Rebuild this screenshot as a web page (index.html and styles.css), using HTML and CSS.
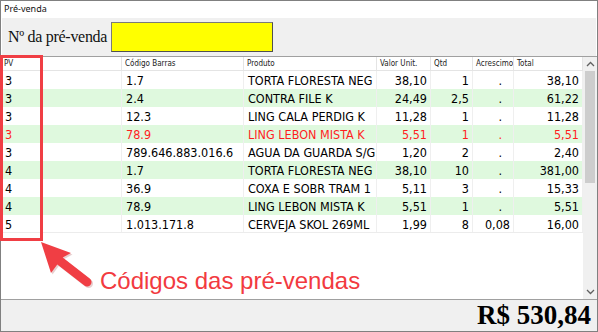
FILE: index.html
```html
<!DOCTYPE html>
<html lang="pt">
<head>
<meta charset="utf-8">
<link rel="stylesheet" href="styles.css">
</head>
<body>
<div class="window">
  <div class="titlebar">Pré-venda</div>
  <div class="toolbar">
    <span class="label">Nº da pré-venda</span>
    <div class="input"></div>
  </div>
  <div class="grid">
    <div class="table">
      <div class="row head">
        <div class="c">PV</div><div class="c">Código Barras</div><div class="c">Produto</div><div class="c">Valor Unit.</div><div class="c">Qtd</div><div class="c">Acrescimo</div><div class="c">Total</div>
      </div>
      <div class="row"><div class="c">3</div><div class="c">1.7</div><div class="c">TORTA FLORESTA NEG</div><div class="c r">38,10</div><div class="c r">1</div><div class="c r dot">.</div><div class="c r">38,10</div></div>
      <div class="row g"><div class="c">3</div><div class="c">2.4</div><div class="c">CONTRA FILE K</div><div class="c r">24,49</div><div class="c r">2,5</div><div class="c r dot">.</div><div class="c r">61,22</div></div>
      <div class="row"><div class="c">3</div><div class="c">12.3</div><div class="c">LING CALA PERDIG K</div><div class="c r">11,28</div><div class="c r">1</div><div class="c r dot">.</div><div class="c r">11,28</div></div>
      <div class="row g red"><div class="c">3</div><div class="c">78.9</div><div class="c">LING LEBON MISTA K</div><div class="c r">5,51</div><div class="c r">1</div><div class="c r dot">.</div><div class="c r">5,51</div></div>
      <div class="row"><div class="c">3</div><div class="c">789.646.883.016.6</div><div class="c">AGUA DA GUARDA S/G</div><div class="c r">1,20</div><div class="c r">2</div><div class="c r dot">.</div><div class="c r">2,40</div></div>
      <div class="row g"><div class="c">4</div><div class="c">1.7</div><div class="c">TORTA FLORESTA NEG</div><div class="c r">38,10</div><div class="c r">10</div><div class="c r dot">.</div><div class="c r">381,00</div></div>
      <div class="row"><div class="c">4</div><div class="c">36.9</div><div class="c">COXA E SOBR TRAM 1</div><div class="c r">5,11</div><div class="c r">3</div><div class="c r dot">.</div><div class="c r">15,33</div></div>
      <div class="row g"><div class="c">4</div><div class="c">78.9</div><div class="c">LING LEBON MISTA K</div><div class="c r">5,51</div><div class="c r">1</div><div class="c r dot">.</div><div class="c r">5,51</div></div>
      <div class="row last"><div class="c">5</div><div class="c">1.013.171.8</div><div class="c">CERVEJA SKOL 269ML</div><div class="c r">1,99</div><div class="c r">8</div><div class="c r">0,08</div><div class="c r">16,00</div></div>
    </div>
    <div class="scrollbar">
      <div class="arrow">
        <svg width="9" height="6" viewBox="0 0 9 6"><path d="M1 5 L4.5 1.5 L8 5" fill="none" stroke="#606060" stroke-width="1.3"/></svg>
      </div>
      <div class="thumb"></div>
      <div class="track"></div>
      <div class="arrow">
        <svg width="9" height="6" viewBox="0 0 9 6"><path d="M1 1 L4.5 4.5 L8 1" fill="none" stroke="#606060" stroke-width="1.3"/></svg>
      </div>
    </div>
  </div>
  <div class="bottom">R$ 530,84</div>

  <div class="hl-box"></div>
  <svg class="hl-arrow" width="70" height="60" viewBox="0 0 70 60">
    <path transform="translate(1.5,1.5)" fill="#a04040" opacity="0.25" d="M10 0 L40 11 L31.7 15.4 L58.7 36.4 A4.5 4.5 0 0 1 53.3 43.6 L26.3 22.6 L20 31 Z"/>
    <path fill="#f03e44" d="M10 0 L40 11 L31.7 15.4 L58.7 36.4 A4.5 4.5 0 0 1 53.3 43.6 L26.3 22.6 L20 31 Z"/>
  </svg>
  <div class="hl-text">Códigos das pré-vendas</div>
</div>
</body>
</html>
```

FILE: styles.css
```css
* { box-sizing: border-box; }
html, body { margin: 0; padding: 0; }
body { width: 598px; height: 332px; overflow: hidden; background: #fff; }

.window {
  position: relative;
  width: 598px;
  height: 332px;
  border: 1px solid #808080;
  display: flex;
  flex-direction: column;
  background: #fff;
}

.titlebar {
  height: 17px;
  line-height: 16px;
  padding-left: 3px;
  font-family: "Noto Sans", sans-serif;
  font-size: 9px;
  color: #111;
  background: #fff;
}

.toolbar {
  height: 38px;
  background: #f0f0f0;
  display: flex;
  align-items: center;
  padding-left: 6px;
  gap: 4px;
  margin: 0 1px;
}

.label {
  font-family: "Liberation Serif", serif;
  font-size: 16px;
  letter-spacing: -0.3px;
  color: #111;
}

.input {
  width: 162px;
  height: 30px;
  background: #ffff00;
  border: 1px solid #7a7a7a;
  border-right-color: #505050;
  border-bottom-color: #505050;
}

.grid {
  flex: 1;
  display: flex;
  border-top: 1px solid #a0a0a0;
  min-height: 0;
}

.table {
  width: 582px;
  display: flex;
  flex-direction: column;
}

.row {
  display: grid;
  grid-template-columns: 121px 122px 133px 54px 42px 41px 69px;
  height: 18px;
  font-family: "DejaVu Sans Condensed", "DejaVu Sans", sans-serif;
  font-stretch: condensed;
  font-size: 12.5px;
  color: #000;
  background: #fff;
}

.row .c {
  padding: 0 3px 0 4px;
  line-height: 19px;
  white-space: nowrap;
  overflow: hidden;
  border-right: 1px solid #efefef;
}

.row .c.r { text-align: right; }
.row .c.dot { padding-right: 11px; }

.row.g { background: #dff9de; }
.row.red { color: #ff1e1e; }
.row.last { border-bottom: 1px solid #ececec; }

.row.head {
  height: 14px;
  font-size: 8px;
  color: #222;
  border-bottom: 1px solid #e4e4e4;
}
.row.head .c {
  line-height: 14px;
  padding-left: 3px;
  border-right: 1px solid #e4e4e4;
}

.scrollbar {
  width: 14px;
  background: #f0f0f0;
  display: flex;
  flex-direction: column;
  align-items: center;
}
.arrow {
  height: 14px;
  display: flex;
  align-items: center;
  justify-content: center;
}
.thumb {
  width: 10px;
  height: 112px;
  background: #cdcdcd;
}
.track { flex: 1; }

.bottom {
  height: 32px;
  border-top: 1px solid #a0a0a0;
  background: #f0f0f0;
  text-align: right;
  padding-right: 6px;
  font-family: "Liberation Serif", serif;
  font-weight: bold;
  font-size: 27px;
  line-height: 31px;
  color: #000;
}

.hl-box {
  position: absolute;
  left: -1px;
  top: 54px;
  width: 43px;
  height: 186px;
  border: 3px solid #f03e44;
}

.hl-arrow {
  position: absolute;
  left: 30px;
  top: 241px;
  overflow: visible;
}

.hl-text {
  position: absolute;
  left: 99px;
  top: 266px;
  font-family: "Liberation Sans", Arial, sans-serif;
  font-size: 24px;
  color: #f23a40;
  white-space: nowrap;
}
```
